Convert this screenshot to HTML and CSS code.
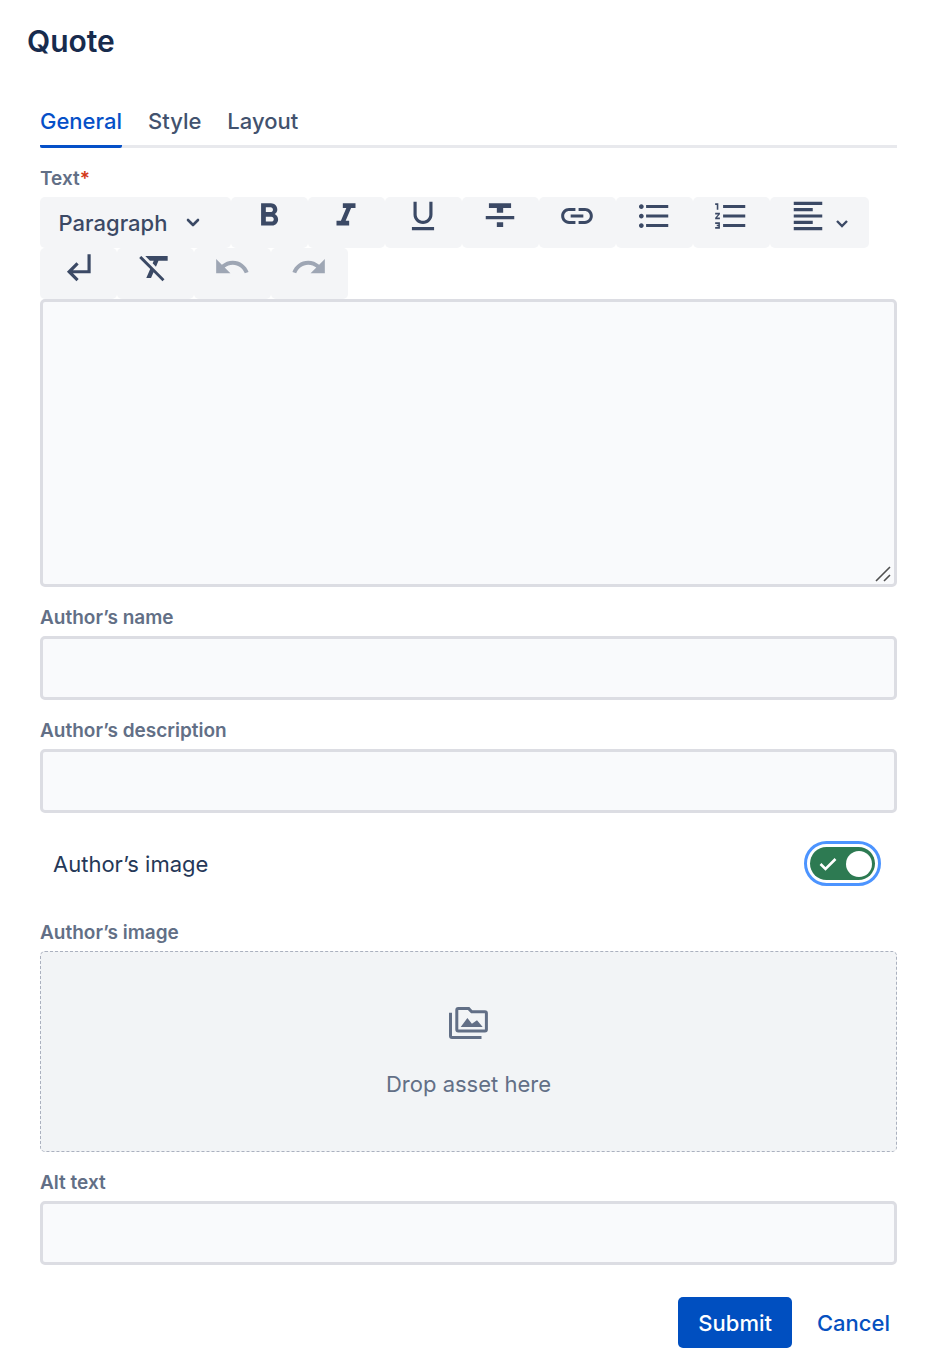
FILE: index.html
```html
<!DOCTYPE html>
<html lang="en">
<head>
<meta charset="utf-8">
<meta name="viewport" content="width=device-width, initial-scale=1">
<title>Quote</title>
<link rel="stylesheet" href="styles.css">
</head>
<body>
<form class="dialog">
  <h1 class="title">Quote</h1>
  <div class="tabs" role="tablist">
    <button type="button" class="tab tab-active" role="tab" aria-selected="true">General</button>
    <button type="button" class="tab" role="tab" aria-selected="false">Style</button>
    <button type="button" class="tab" role="tab" aria-selected="false">Layout</button>
  </div>

  <div class="fields">
    <div class="field">
      <label class="label" for="text">Text<span class="required">*</span></label>
      <div class="editor">
        <div class="toolbar" role="toolbar" aria-label="Formatting">
          <button type="button" class="tool tool-style">Paragraph
            <svg class="chevron" viewBox="0 0 14 10" aria-hidden="true"><path d="M2 2l5 5 5-5" fill="none" stroke="currentColor" stroke-width="2.6" stroke-linecap="round" stroke-linejoin="round"/></svg>
          </button>
          <button type="button" class="tool" aria-label="Bold"><svg class="icon" viewBox="0 0 24 24"><path d="M15.6 10.79c.97-.67 1.65-1.77 1.65-2.79 0-2.26-1.75-4-4-4H7v14h7.04c2.09 0 3.71-1.7 3.71-3.79 0-1.52-.86-2.82-2.15-3.42zM10 6.5h3c.83 0 1.5.67 1.5 1.5s-.67 1.5-1.5 1.5h-3v-3zm3.5 9H10v-3h3.5c.83 0 1.5.67 1.5 1.5s-.67 1.5-1.5 1.5z"/></svg></button>
          <button type="button" class="tool" aria-label="Italic"><svg class="icon" viewBox="0 0 24 24"><path d="M10 4v3h2.21l-3.42 8H6v3h8v-3h-2.21l3.42-8H18V4z"/></svg></button>
          <button type="button" class="tool" aria-label="Underline"><svg class="icon" viewBox="0 0 24 24"><path d="M12 17c3.31 0 6-2.69 6-6V3h-2v8c0 2.21-1.79 4-4 4s-4-1.79-4-4V3H6v8c0 3.31 2.69 6 6 6zm-7 2v2h14v-2H5z"/></svg></button>
          <button type="button" class="tool" aria-label="Strikethrough"><svg class="icon" viewBox="0 0 24 24"><path d="M10 19h4v-3h-4v3zM5 4v3h5v3h4V7h5V4H5zM3 14h18v-2H3v2z"/></svg></button>
          <button type="button" class="tool" aria-label="Link"><svg class="icon" viewBox="0 0 24 24"><path d="M3.9 12c0-1.71 1.39-3.1 3.1-3.1h4V7H7c-2.76 0-5 2.24-5 5s2.24 5 5 5h4v-1.9H7c-1.71 0-3.1-1.39-3.1-3.1zM8 13h8v-2H8v2zm9-6h-4v1.9h4c1.71 0 3.1 1.39 3.1 3.1s-1.39 3.1-3.1 3.1h-4V17h4c2.76 0 5-2.24 5-5s-2.24-5-5-5z"/></svg></button>
          <button type="button" class="tool" aria-label="Bulleted list"><svg class="icon" viewBox="0 0 24 24"><path d="M4 10.5c-.83 0-1.5.67-1.5 1.5s.67 1.5 1.5 1.5 1.5-.67 1.5-1.5-.67-1.5-1.5-1.5zm0-6c-.83 0-1.5.67-1.5 1.5S3.17 7.5 4 7.5 5.5 6.83 5.5 6 4.83 4.5 4 4.5zm0 12c-.83 0-1.5.68-1.5 1.5s.68 1.5 1.5 1.5 1.5-.68 1.5-1.5-.67-1.5-1.5-1.5zM7 19h14v-2H7v2zm0-6h14v-2H7v2zm0-8v2h14V5H7z"/></svg></button>
          <button type="button" class="tool" aria-label="Numbered list"><svg class="icon" viewBox="0 0 24 24"><path d="M2 17h2v.5H3v1h1v.5H2v1h3v-4H2v1zm1-9h1V4H2v1h1v3zm-1 3h1.8L2 13.1v.9h3v-1H3.2L5 10.9V10H2v1zm5-6v2h14V5H7zm0 14h14v-2H7v2zm0-6h14v-2H7v2z"/></svg></button>
          <button type="button" class="tool tool-align" aria-label="Align"><svg class="icon" viewBox="0 0 24 24"><path d="M15 15H3v2h12v-2zm0-8H3v2h12V7zM3 13h18v-2H3v2zm0 8h18v-2H3v2zM3 3v2h18V3H3z"/></svg><svg class="chevron chevron-small" viewBox="0 0 12 8" aria-hidden="true"><path d="M1 1l5 5 5-5" fill="none" stroke="currentColor" stroke-width="2.4"/></svg></button>
          <button type="button" class="tool" aria-label="Line break"><svg class="icon" viewBox="0 0 24 24"><path d="M11 9l1.42 1.42L8.83 14H18V4h2v12H8.83l3.59 3.58L11 21l-6-6 6-6z"/></svg></button>
          <button type="button" class="tool" aria-label="Clear formatting"><svg class="icon" viewBox="0 0 24 24"><path d="M3.27 5L2 6.27l6.97 6.97L6.5 19h3l1.57-3.66L16.73 21 18 19.73 3.55 5.27 3.27 5zM6 5v.18L8.82 8h2.4l-.72 1.68 2.1 2.1L14.21 8H20V5H6z"/></svg></button>
          <button type="button" class="tool" aria-label="Undo" disabled><svg class="icon" viewBox="0 0 24 24"><path d="M12.5 8c-2.65 0-5.05.99-6.9 2.6L2 7v9h9l-3.62-3.62c1.39-1.16 3.16-1.88 5.12-1.88 3.54 0 6.55 2.31 7.6 5.5l2.37-.78C21.08 11.03 17.15 8 12.5 8z"/></svg></button>
          <button type="button" class="tool" aria-label="Redo" disabled><svg class="icon" viewBox="0 0 24 24"><path d="M18.4 10.6C16.55 8.99 14.15 8 11.5 8c-4.65 0-8.58 3.03-9.96 7.22L3.9 16c1.05-3.19 4.05-5.5 7.6-5.5 1.95 0 3.73.72 5.12 1.88L13 16h9V7l-3.6 3.6z"/></svg></button>
        </div>
        <div class="area-wrap">
          <textarea class="control area" id="text" required></textarea>
          <svg class="grip" viewBox="0 0 16 16" aria-hidden="true"><path d="M1 15L15 1M9 15l6-6" stroke="#505050" stroke-width="1.6" fill="none"/></svg>
        </div>
      </div>
    </div>

    <div class="field">
      <label class="label" for="name">Author’s name</label>
      <input class="control" id="name" type="text">
    </div>

    <div class="field">
      <label class="label" for="description">Author’s description</label>
      <input class="control" id="description" type="text">
    </div>

    <div class="toggle-row">
      <label for="show-image">Author’s image</label>
      <span class="toggle">
        <input class="switch" id="show-image" type="checkbox" role="switch" checked>
        <svg class="check" viewBox="0 0 18 14" aria-hidden="true"><path d="M1.500 7l5 5L16.500 2" fill="none" stroke="#fff" stroke-width="2.6"/></svg>
      </span>
    </div>

    <div class="field">
      <label class="label" for="asset">Author’s image</label>
      <button type="button" class="dropzone" id="asset">
        <svg class="media" viewBox="0 0 40 33" aria-hidden="true"><path d="M1.5 5.7V29q0 1.500 1.500 1.500h29.500M9.300 1.600h10.400l3 3.200h13.200q1.500 0 1.500 1.500v16.200q0 1.500-1.500 1.500H9.300q-1.500 0-1.500-1.500V3.100q0-1.500 1.500-1.500z" fill="none" stroke="currentColor" stroke-width="3"/><path d="M11.700 20l6.700-9 4.500 5.800L28 13.300l5.700 6.700z" fill="currentColor"/></svg>
        <span>Drop asset here</span>
      </button>
    </div>

    <div class="field">
      <label class="label" for="alt">Alt text</label>
      <input class="control" id="alt" type="text">
    </div>
  </div>

  <div class="actions">
    <button type="submit" class="action action-primary">Submit</button>
    <button type="button" class="action">Cancel</button>
  </div>
</form>
</body>
</html>
```
FILE: styles.css
```css
* {
  box-sizing: border-box;
}

body {
  margin: 0;
  background: #fff;
  color: #253858;
  font: 400 22px/32px Inter, "Liberation Sans", sans-serif;
}

button,
input,
textarea {
  margin: 0;
  font: inherit;
}

button {
  border: 0;
  padding: 0;
  background: none;
  color: inherit;
}

.dialog {
  padding: 21px 30px 22px 27px;
}

.title {
  margin: 0;
  color: #172b4d;
  font-size: 30px;
  font-weight: 600;
  line-height: 40px;
}

.tabs {
  display: flex;
  gap: 26px;
  margin: 44px 13px 0;
  box-shadow: inset 0 -3px #e8e9ed;
}

.tab {
  padding-bottom: 7px;
  border-bottom: 3px solid transparent;
  color: #42526e;
  font-weight: 500;
  line-height: 33px;
}

.tab-active {
  border-color: #0550c8;
  border-radius: 2px;
  color: #0550c8;
}

.fields {
  display: flex;
  flex-direction: column;
  gap: 18px;
  margin: 18px 13px 0;
}

.field {
  display: flex;
  flex-direction: column;
  gap: 5px;
}

.label {
  color: #626f86;
  font-size: 19px;
  font-weight: 600;
  line-height: 26px;
}

.required {
  color: #d3371a;
}

.toolbar {
  display: flex;
  flex-wrap: wrap;
}

.tool {
  display: flex;
  justify-content: center;
  align-items: flex-start;
  width: 77px;
  height: 51px;
  padding-right: 1px;
  border-radius: 5px;
  background: #f4f5f7;
  color: #3b4965;
  font-weight: 500;
}

.tool:disabled {
  color: #9ea6b4;
}

.tool-style {
  align-items: center;
  gap: 19px;
  width: 191px;
  padding-right: 12px;
}

.tool-align {
  gap: 9px;
  width: 99px;
  padding-right: 3px;
}

.icon {
  width: 38px;
  height: 38px;
  fill: currentColor;
}

.chevron {
  width: 14px;
  height: 10px;
}

.chevron-small {
  width: 12px;
  height: 8px;
  margin-top: 23px;
}

.control {
  display: block;
  width: 100%;
  height: 64px;
  padding: 12px 16px;
  border: 3px solid #dcdde3;
  border-radius: 5px;
  background: #f9fafc;
  color: #172b4d;
}

.area-wrap {
  position: relative;
}

.area {
  height: 288px;
  resize: none;
}

.grip {
  position: absolute;
  right: 6px;
  bottom: 5px;
  width: 16px;
  height: 16px;
}

.toggle-row {
  display: flex;
  justify-content: space-between;
  align-items: center;
  height: 65px;
  margin-bottom: 6px;
  padding: 0 22px 0 13px;
}

.toggle {
  display: grid;
  align-items: center;
}

.switch,
.check {
  grid-area: 1 / 1;
}

.switch {
  appearance: none;
  display: flex;
  justify-content: flex-end;
  align-items: center;
  width: 65px;
  height: 33px;
  padding: 3px;
  border-radius: 17px;
  background: #2d7a52;
  outline: 3px solid #4c94ff;
  outline-offset: 3px;
}

.switch::before {
  width: 26px;
  height: 26px;
  border-radius: 50%;
  background: #fff;
  content: "";
}

.check {
  width: 18px;
  height: 14px;
  margin-left: 9px;
  pointer-events: none;
}

.dropzone {
  display: flex;
  flex-direction: column;
  justify-content: center;
  align-items: center;
  gap: 28px;
  height: 201px;
  padding-top: 4px;
  border: 1px dashed #abb1bf;
  border-radius: 5px;
  background: #f2f4f6;
  color: #626f86;
}

.media {
  width: 40px;
  height: 33px;
}

.actions {
  display: flex;
  justify-content: flex-end;
  gap: 5px;
  margin-top: 32px;
}

.action {
  height: 51px;
  padding: 0 20px;
  border-radius: 5px;
  color: #0550c0;
  font-weight: 500;
}

.action-primary {
  background: #004fc0;
  color: #fff;
}
```
